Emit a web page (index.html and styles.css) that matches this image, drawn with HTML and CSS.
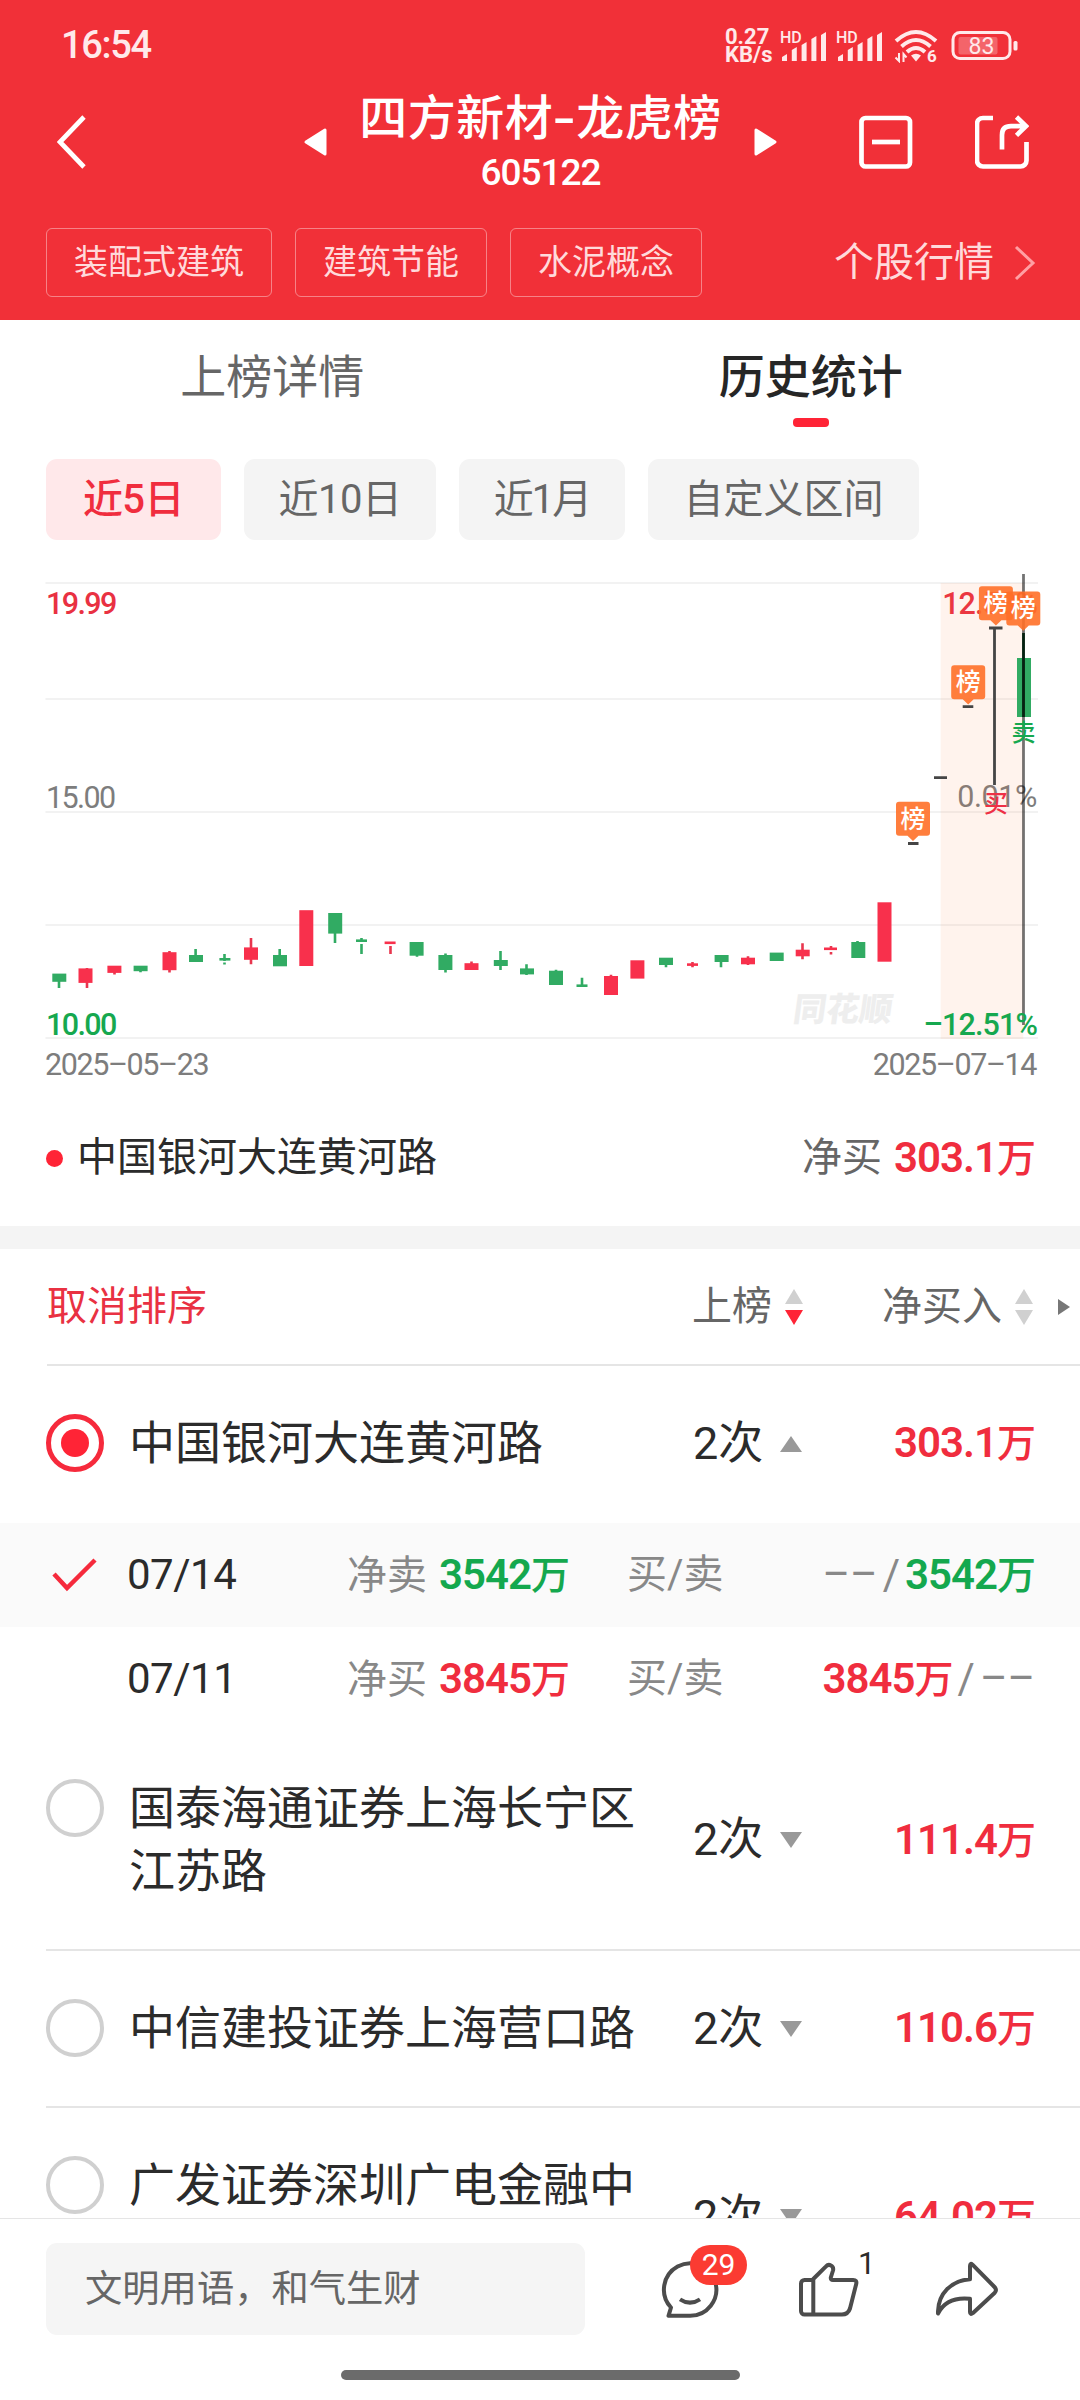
FILE: index.html
```
<!DOCTYPE html>
<html lang="zh-CN">
<head>
  <meta charset="UTF-8" />
  <meta name="viewport" content="width=device-width, initial-scale=1.0"/>
  <title>四方新材-龙虎榜</title>
  <link rel="stylesheet" href="styles.css">
</head>
<body>
  <header>
    <div class="status">
      <span class="time">16:54</span>
      <div class="status-icons">
        <div class="speed"><div>0.27</div><div>KB/s</div></div>
        <svg class="signal" width="46" height="34" viewBox="0 0 46 34">
          <text x="0" y="14">HD</text>
          <path d="M2 32V28l5-3v7zM11.8 32V21l5-3v14zM21.6 32V16l5-3v19zM31.4 32V10l5-3v25zM41 32V6l5-3v29z"/>
        </svg>
        <svg class="signal" width="46" height="34" viewBox="0 0 46 34">
          <text x="0" y="14">HD</text>
          <path d="M2 32V28l5-3v7zM11.8 32V21l5-3v14zM21.6 32V16l5-3v19zM31.4 32V10l5-3v25zM41 32V6l5-3v29z"/>
        </svg>
        <svg class="wifi" width="44" height="34" viewBox="0 0 44 34">
          <path class="arc" d="M2 12Q22-6 42 12M7.500 17.500Q22 4.500 36.500 17.500M13 23Q22 15 31 23"/>
          <path d="M17 26.500q5-3.500 10 0l-5 6z"/>
          <path class="updown" d="M5 24v8l-3.500-3.500M9.500 33v-8l3 3.500"/>
          <text x="33" y="33">6</text>
        </svg>
        <svg class="battery" width="68" height="32" viewBox="0 0 68 32">
          <rect class="shell" x="2" y="2.500" width="57" height="26" rx="7"/>
          <rect class="level" x="7.500" y="7" width="39" height="17.500" rx="2"/>
          <rect x="62.500" y="11" width="4" height="9.500" rx="1.500"/>
          <text x="30.500" y="23.500">83</text>
        </svg>
      </div>
    </div>

    <div class="nav">
      <svg class="back" width="30" height="54" viewBox="0 0 30 54"><path d="M27 2L3 27L27 52"/></svg>
      <div class="title">
        <svg width="24" height="30" viewBox="0 0 24 30"><path d="M22 3V27L3 15z"/></svg>
        <div class="title-text">
          <h1>四方新材<i>-</i>龙虎榜</h1>
          <div class="code">605122</div>
        </div>
        <svg width="24" height="30" viewBox="0 0 24 30"><path d="M2 3V27L21 15z"/></svg>
      </div>
      <div class="nav-icons">
        <svg width="54" height="54" viewBox="0 0 54 54"><rect x="2.500" y="3" width="48.500" height="48.500" rx="4"/><path d="M13 27h28"/></svg>
        <svg width="54" height="54" viewBox="0 0 54 54"><path d="M18 3H8a6 6 0 0 0-6 6V45.500a6 6 0 0 0 6 6H45.500a6 6 0 0 0 6-6V27M27 34.500V20q0-8.800 9-8.800H51M41.500 2L51 11.200L41.500 20.400"/></svg>
      </div>
    </div>

    <div class="tags">
      <span class="tag">装配式建筑</span>
      <span class="tag">建筑节能</span>
      <span class="tag">水泥概念</span>
      <a class="quote">个股行情
        <svg width="22" height="36" viewBox="0 0 22 36"><path d="M2 2L19 18L2 34"/></svg>
      </a>
    </div>
  </header>

  <main>
    <div class="tabs">
      <div class="tab">上榜详情</div>
      <div class="tab active">历史统计</div>
    </div>

    <div class="chips">
      <span class="chip active">近5日</span>
      <span class="chip">近10日</span>
      <span class="chip">近1月</span>
      <span class="chip">自定义区间</span>
    </div>

    <!-- K线图 -->
    <svg class="chart" width="1080" height="520" viewBox="0 570 1080 520">
      <path class="grid" d="M45.500 583H1038M45.500 699H1038M45.500 812H1038M45.500 925H1038M45.500 1038H1038"/>
      <text class="watermark" transform="translate(792 1021) skewX(-8)">同花顺</text>
      <g class="labels">
        <text class="left up" x="46" y="614">19.99</text>
        <text class="left" x="46" y="808">15.00</text>
        <text class="left down" x="46" y="1034.500">10.00</text>
        <text class="day" x="45" y="1074.500">2025–05–23</text>
        <text class="day end" x="1036" y="1074.500">2025–07–14</text>
        <text class="up end" x="1037" y="614">12.53%</text>
        <text class="pct end" x="1037" y="807">0.01%</text>
      </g>
      <rect class="range" x="940.700" y="583" width="82.600" height="456"/>
      <g class="candle up">
        <path d="M87 968V988M114.500 966V974.600M169.500 951V972.500M251 938V964.300M390.500 942V944M390.500 946V954M471.500 961.500V970M611 974.700V995M692.500 962V967.300M748 956.300V965M802.500 943.300V959.300M831 946V950M831 952V954.500"/>
        <rect x="78.500" y="968.400" width="14" height="14.500"/>
        <rect x="107.400" y="965.700" width="14" height="7.200"/>
        <rect x="162.500" y="952.200" width="14" height="18"/>
        <rect x="244" y="947.400" width="14" height="12.400"/>
        <rect x="299.300" y="910.200" width="14" height="55.800"/>
        <rect x="384.600" y="941.500" width="11" height="2.600"/>
        <rect x="464.500" y="963.200" width="14" height="6.800"/>
        <rect x="604" y="976" width="14" height="19"/>
        <rect x="630.400" y="960.300" width="14" height="18.300"/>
        <rect x="687" y="963.300" width="11" height="2.600"/>
        <rect x="741" y="957.700" width="14" height="6.600"/>
        <rect x="795.700" y="949.700" width="14" height="6.600"/>
        <rect x="824" y="947.500" width="13" height="2.600"/>
        <rect x="877.500" y="902.300" width="14" height="59.400"/>
      </g>
      <g class="candle down">
        <path d="M59 974V988M140.500 966V972.200M195.600 949V961M224.500 954V961M224.500 962.500V964.500M279.700 949V966M335 913V943M361.500 938V942M361.500 944V954M417 942V956.700M445.500 953.600V972.500M500.500 951V970M526.500 964.300V975M556 969.700V985M582 977.700V986M666 958V967.300M721 955V967.300M857.500 941V958"/>
        <rect x="52.300" y="973.600" width="14" height="8.200"/>
        <rect x="133.600" y="965.700" width="14" height="5.500"/>
        <rect x="189" y="955" width="14" height="7"/>
        <rect x="219.400" y="958" width="11" height="2.600"/>
        <rect x="273" y="955" width="14" height="11.300"/>
        <rect x="328.200" y="913" width="14" height="20.600"/>
        <rect x="356" y="939.400" width="11" height="2.600"/>
        <rect x="409.600" y="942" width="14" height="13.700"/>
        <rect x="438.400" y="955" width="14" height="15"/>
        <rect x="493.800" y="960" width="14" height="6"/>
        <rect x="520" y="968.400" width="14" height="6"/>
        <rect x="549" y="970.700" width="14" height="14.300"/>
        <rect x="576.500" y="984.400" width="11" height="2.600"/>
        <rect x="659" y="957.700" width="14" height="7.300"/>
        <rect x="714.600" y="955" width="14" height="7"/>
        <rect x="769.700" y="952.600" width="14" height="8.400"/>
        <rect x="851.300" y="942" width="14" height="16"/>
        <rect x="1017" y="658" width="14" height="59"/>
      </g>
      <path class="flat" d="M908 843.500H918.500M934 777.700H947M962.700 706.700H973.300M989 628H1002.500M994.500 628V785"/>
      <path class="wick" d="M1023.500 633V717"/>
      <path class="cross" d="M1023.500 574V1025"/>
      <text class="labels down end low" x="1037" y="1034.500">–12.51%</text>
      <text class="mark up" x="996" y="812">买</text>
      <text class="mark down" x="1023.500" y="741">卖</text>
      <g class="flag">
        <path d="M899 801.700h28a3 3 0 0 1 3 3v28a3 3 0 0 1-3 3h-8.500L913 841l-5.500-5.300H899a3 3 0 0 1-3-3v-28a3 3 0 0 1 3-3z"/>
        <text x="913" y="827.500">榜</text>
      </g>
      <g class="flag" transform="translate(55.200 -136.500)">
        <path d="M899 801.700h28a3 3 0 0 1 3 3v28a3 3 0 0 1-3 3h-8.500L913 841l-5.500-5.300H899a3 3 0 0 1-3-3v-28a3 3 0 0 1 3-3z"/>
        <text x="913" y="827.500">榜</text>
      </g>
      <g class="flag" transform="translate(82.900 -215.400)">
        <path d="M899 801.700h28a3 3 0 0 1 3 3v28a3 3 0 0 1-3 3h-8.500L913 841l-5.500-5.300H899a3 3 0 0 1-3-3v-28a3 3 0 0 1 3-3z"/>
        <text x="913" y="827.500">榜</text>
      </g>
      <g class="flag" transform="translate(110.300 -210.300)">
        <path d="M899 801.700h28a3 3 0 0 1 3 3v28a3 3 0 0 1-3 3h-8.500L913 841l-5.500-5.300H899a3 3 0 0 1-3-3v-28a3 3 0 0 1 3-3z"/>
        <text x="913" y="827.500">榜</text>
      </g>
    </svg>

    <div class="legend">
      <span class="dot"></span>
      <span>中国银河大连黄河路</span>
      <span class="net">净买</span>
      <span class="num up">303.1<em>万</em></span>
    </div>

    <div class="list">
      <div class="list-head">
        <span class="cancel">取消排序</span>
        <span class="sort">上榜
          <svg width="18" height="36" viewBox="0 0 18 36"><path d="M9 0l9 15H0z"/><path class="on" d="M9 36L0 21h18z"/></svg>
        </span>
        <span class="sort last">净买入
          <svg width="18" height="36" viewBox="0 0 18 36"><path d="M9 0l9 15H0z"/><path d="M9 36L0 21h18z"/></svg>
        </span>
        <svg class="more" width="12" height="16" viewBox="0 0 12 16"><path d="M0 0l12 8L0 16z"/></svg>
      </div>

      <div class="row open">
        <span class="radio checked"></span>
        <span class="name">中国银河大连黄河路</span>
        <span class="count">2次<svg width="22" height="16" viewBox="0 0 22 16"><path d="M11 0l11 16H0z"/></svg></span>
        <span class="num up">303.1<em>万</em></span>
      </div>
      <div class="sub selected">
        <svg class="check" width="46" height="34" viewBox="0 0 46 34"><path d="M2 16L15 30L43 2"/></svg>
        <span class="date">07/14</span>
        <span class="label">净卖 <b class="num down">3542<em>万</em></b></span>
        <span class="label">买/卖</span>
        <span class="pair"><i>––</i><s>/</s><b class="num down">3542<em>万</em></b></span>
      </div>
      <div class="sub">
        <span></span>
        <span class="date">07/11</span>
        <span class="label">净买 <b class="num up">3845<em>万</em></b></span>
        <span class="label">买/卖</span>
        <span class="pair"><b class="num up">3845<em>万</em></b><s>/</s><i>––</i></span>
      </div>

      <div class="row">
        <span class="radio"></span>
        <span class="name">国泰海通证券上海长宁区江苏路</span>
        <span class="count">2次<svg width="22" height="16" viewBox="0 0 22 16"><path d="M11 16L0 0h22z"/></svg></span>
        <span class="num up">111.4<em>万</em></span>
      </div>
      <div class="row">
        <span class="radio"></span>
        <span class="name">中信建投证券上海营口路</span>
        <span class="count">2次<svg width="22" height="16" viewBox="0 0 22 16"><path d="M11 16L0 0h22z"/></svg></span>
        <span class="num up">110.6<em>万</em></span>
      </div>
      <div class="row">
        <span class="radio"></span>
        <span class="name">广发证券深圳广电金融中心</span>
        <span class="count">2次<svg width="22" height="16" viewBox="0 0 22 16"><path d="M11 16L0 0h22z"/></svg></span>
        <span class="num up">64.02<em>万</em></span>
      </div>
    </div>
  </main>

  <footer>
    <div class="toolbar">
      <div class="comment">文明用语，和气生财</div>
      <div class="action">
        <svg width="62" height="70" viewBox="0 0 62 70"><path d="M30 60.800A26.200 26.200 0 1 0 11 52.500L8.500 60.800zM20 44.300Q30 51 40 44.300"/></svg>
        <span class="badge">29</span>
      </div>
      <div class="action">
        <svg width="62" height="70" viewBox="0 0 62 70"><path d="M15.300 25H6.500a3.500 3.500 0 0 0-3.500 3.500V56a3.500 3.500 0 0 0 3.500 3.500H44q6 0 8-6L58.200 29q1-4-3-4H35q-2.500 0-2.200-2.500L35 15.500q.8-3.500-2-5t-5 .8L15.300 24zM15.300 24V59.500"/></svg>
        <span class="likes">1</span>
      </div>
      <div class="action">
        <svg width="62" height="70" viewBox="0 0 62 70"><path d="M2 58.500C1.500 38 16 25.500 34 24.300V11q0-3.500 2.500-1.300L58.500 32q3 3 0 6L37 58q-3 2.300-3-1V43.700C18 42 8 46.500 2 58.500z"/></svg>
      </div>
    </div>
    <div class="home-bar"></div>
  </footer>
</body>
</html>
```
FILE: styles.css
```
* {
  box-sizing: border-box;
}
body {
  margin: 0;
  width: 1080px;
  height: 2400px;
  overflow: hidden;
  display: flex;
  flex-direction: column;
  background: #fff;
  color: #2b2b2b;
  font-family: Roboto, "Noto Sans CJK SC", sans-serif;
  line-height: 1.2;
}
i, em, s {
  font-style: normal;
  text-decoration: none;
}
svg {
  display: block;
  flex: none;
}

/* header */
header {
  flex: none;
  height: 320px;
  background: #f13038;
  color: #fff;
}
.status {
  display: flex;
  justify-content: space-between;
  align-items: center;
  height: 92px;
  padding: 0 61px 0 61px;
  color: #ffe9ea;
}
.time {
  font-size: 38px;
  font-weight: 500;
  letter-spacing: -1.3px;
}
.status-icons {
  display: flex;
  align-items: center;
  fill: #ffe9ea;
}
.speed {
  width: 55px;
  font-size: 22px;
  font-weight: 700;
  line-height: 18px;
}
.signal {
  margin-right: 10px;
}
.signal text {
  font-size: 16px;
  font-weight: 500;
}
.wifi {
  margin: 0 13px 0 2px;
}
.wifi text {
  font-size: 17px;
  font-weight: 700;
}
.wifi .arc {
  fill: none;
  stroke: #ffe9ea;
  stroke-width: 4;
}
.wifi .updown {
  fill: none;
  stroke: #ffe9ea;
  stroke-width: 2;
}
.battery .shell {
  fill: none;
  stroke: #ffe9ea;
  stroke-width: 3;
}
.battery .level {
  fill: rgba(255, 255, 255, 0.25);
}
.battery text {
  font-size: 23px;
  text-anchor: middle;
}
.nav {
  display: grid;
  grid-template-columns: 1fr auto 1fr;
  align-items: center;
  height: 100px;
  padding: 0 51px 0 57px;
}
.back, .nav-icons svg {
  fill: none;
  stroke: #fff;
  stroke-width: 4.7;
}
.title {
  display: flex;
  align-items: center;
  gap: 32px;
  margin-left: -5px;
  fill: #fff;
}
.title svg {
  stroke: #fff;
  stroke-width: 3;
  stroke-linejoin: round;
}
.title-text {
  height: 100px;
  text-align: center;
}
h1 {
  margin: 0;
  font-size: 48px;
  font-weight: 500;
  line-height: 54px;
  letter-spacing: 0.5px;
  white-space: nowrap;
}
h1 i {
  display: inline-block;
  width: 23px;
  transform: scaleX(1.4);
}
.code {
  font-size: 37px;
  font-weight: 500;
  line-height: 54px;
  letter-spacing: -1px;
}
.nav-icons {
  display: flex;
  justify-content: flex-end;
  gap: 62px;
}
.tags {
  display: flex;
  align-items: center;
  gap: 23px;
  height: 69px;
  margin-top: 36px;
  padding: 0 44px 0 46px;
}
.tag {
  height: 69px;
  padding: 0 27px;
  border: 1px solid rgba(255, 255, 255, 0.4);
  border-radius: 6px;
  color: #ffdadb;
  font-size: 34px;
  line-height: 67px;
}
.quote {
  display: flex;
  align-items: center;
  gap: 20px;
  margin-left: auto;
  color: #ffdadb;
  font-size: 40px;
}
.quote svg {
  fill: none;
  stroke: #ff9fa3;
  stroke-width: 3;
}

/* tabs and ranges */
main {
  flex: 1;
  min-height: 0;
  overflow: hidden;
}
.tabs {
  display: flex;
  height: 139px;
  padding-left: 3px;
}
.tab {
  flex: 1;
  padding-top: 28px;
  text-align: center;
  font-size: 46px;
  line-height: 58px;
  color: #666;
}
.tab.active {
  color: #262626;
  font-weight: 500;
}
.tab.active::after {
  content: "";
  display: block;
  width: 36px;
  height: 9px;
  margin: 12px auto 0;
  border-radius: 4px;
  background: #ff2436;
}
.chips {
  display: flex;
  gap: 23px;
  padding-left: 46px;
}
.chip {
  width: 175px;
  height: 81px;
  border-radius: 11px;
  background: #f4f4f4;
  color: #666;
  font-size: 40px;
  line-height: 81px;
  letter-spacing: -0.5px;
  text-align: center;
}
.chip:nth-child(2) {
  width: 192px;
}
.chip:nth-child(3) {
  width: 166px;
  letter-spacing: -2px;
}
.chip:nth-child(4) {
  width: 271px;
  letter-spacing: 0;
}
.chip.active {
  background: #ffe8ea;
  color: #f02d3e;
  font-weight: 500;
}

/* chart */
.chart {
  margin-top: 30px;
}
.grid {
  stroke: #f2f2f2;
  stroke-width: 2;
}
.labels {
  font-size: 30.500px;
  letter-spacing: -0.9px;
  fill: #7d7d7d;
}
.labels .up, .labels .down, .low {
  font-weight: 500;
}
.labels .up {
  fill: #e93142;
}
.labels .down, .labels.down {
  fill: #16a84f;
}
.labels .left {
  letter-spacing: -1.6px;
}
.labels .day {
  letter-spacing: -1.4px;
}
.labels .pct {
  letter-spacing: -0.4px;
}
.end {
  text-anchor: end;
}
.watermark {
  font-size: 33px;
  font-weight: 900;
  fill: #eee;
}
.range {
  fill: rgba(255, 120, 50, 0.09);
}
.candle.up {
  fill: #f8304c;
}
.candle.down {
  fill: #31ab63;
}
.candle path {
  stroke-width: 2.600;
}
.candle.up path {
  stroke: #e8364e;
}
.candle.down path {
  stroke: #31ab63;
}
.flat {
  stroke: #454545;
  stroke-width: 2.800;
}
.wick {
  stroke: #0d4a26;
  stroke-width: 2.800;
}
.cross {
  stroke: rgba(0, 0, 0, 0.55);
  stroke-width: 2.800;
}
.mark {
  font-size: 24px;
  font-weight: 500;
  text-anchor: middle;
}
.mark.up {
  fill: #ee3046;
}
.mark.down {
  fill: #16a84f;
}
.flag path {
  fill: rgba(255, 112, 40, 0.9);
}
.flag text {
  fill: #fff;
  font-size: 25px;
  font-weight: 500;
  text-anchor: middle;
}

/* selected seat */
.legend {
  display: flex;
  align-items: center;
  height: 136px;
  padding: 0 45px 0 46px;
  font-size: 40px;
}
.dot {
  width: 17px;
  height: 17px;
  margin-right: 14px;
  border-radius: 50%;
  background: #ff2436;
}
.net {
  margin-left: auto;
  margin-right: 12px;
  color: #666;
}
.num {
  font-size: 42px;
  font-weight: 600;
  letter-spacing: -1px;
  white-space: nowrap;
}
.num em {
  font-size: 39px;
  font-weight: 500;
}
.num.up {
  color: #f02d3e;
}
.num.down {
  color: #14a84e;
}

/* list */
.list {
  border-top: 23px solid #f4f4f4;
}
.list-head {
  display: flex;
  align-items: center;
  height: 117px;
  margin-left: 47px;
  border-bottom: 2px solid #e5e5e5;
  font-size: 40px;
  color: #666;
}
.cancel {
  width: 645px;
  color: #e93142;
}
.sort {
  display: flex;
  align-items: center;
  gap: 13px;
}
.sort.last {
  margin-left: 79px;
}
.sort svg {
  fill: #d0d0d0;
}
.sort .on {
  fill: #ff2436;
}
.more {
  margin-left: 25px;
  fill: #777;
}
.row {
  display: grid;
  grid-template-columns: 83px 564px 140px 1fr;
  align-items: center;
  margin-left: 46px;
  padding: 46px 45px 46px 0;
  border-bottom: 2px solid #e5e5e5;
}
.row.open {
  border-bottom-color: transparent;
}
.radio {
  align-self: start;
  width: 58px;
  height: 58px;
  margin-top: 2px;
  border: 4px solid #d0d0d0;
  border-radius: 50%;
}
.radio.checked {
  padding: 10px;
  border: 5px solid #f62a3c;
  background: #ff2436;
  background-clip: content-box;
}
.name {
  width: 512px;
  font-size: 46px;
  line-height: 63px;
}
.count {
  display: flex;
  align-items: center;
  gap: 17px;
  font-size: 45px;
}
.count svg {
  fill: #999;
}
.row .num {
  text-align: right;
}
.sub {
  display: grid;
  grid-template-columns: 81px 220px 280px 120px 1fr;
  align-items: center;
  height: 104px;
  padding: 0 45px 0 46px;
}
.sub.selected {
  background: #fafafa;
}
.check {
  margin-left: 6px;
  fill: none;
  stroke: #f62a3c;
  stroke-width: 4.500;
}
.date {
  font-size: 42px;
  letter-spacing: -0.5px;
}
.label {
  font-size: 40px;
  color: #888;
}
.label .num {
  margin-left: 2px;
}
.pair {
  display: flex;
  justify-content: flex-end;
  align-items: center;
  gap: 5px;
  font-size: 42px;
  color: #888;
}

/* bottom bar */
footer {
  flex: none;
  height: 182px;
  border-top: 1px solid #e5e5e5;
  background: #fff;
}
.toolbar {
  display: flex;
  height: 117px;
  padding: 24px 0 0 46px;
}
.comment {
  width: 539px;
  height: 92px;
  margin-right: 75px;
  padding-left: 39px;
  border-radius: 11px;
  background: #f5f5f5;
  color: #666;
  font-size: 37.300px;
  line-height: 93px;
}
.action {
  position: relative;
  margin: 12px 76px 0 0;
}
.action svg {
  fill: none;
  stroke: #4c4c4c;
  stroke-width: 4;
  stroke-linejoin: round;
}
.badge {
  position: absolute;
  left: 30px;
  top: -10px;
  width: 57px;
  height: 40px;
  border-radius: 20px;
  background: #fb3b32;
  color: #fff;
  font-size: 30px;
  line-height: 40px;
  text-align: center;
}
.likes {
  position: absolute;
  left: 60px;
  top: -11px;
  font-size: 31px;
  line-height: 40px;
}
.home-bar {
  width: 399px;
  height: 10px;
  margin: 34px auto 0;
  border-radius: 5px;
  background: #6b6b6b;
}
```
